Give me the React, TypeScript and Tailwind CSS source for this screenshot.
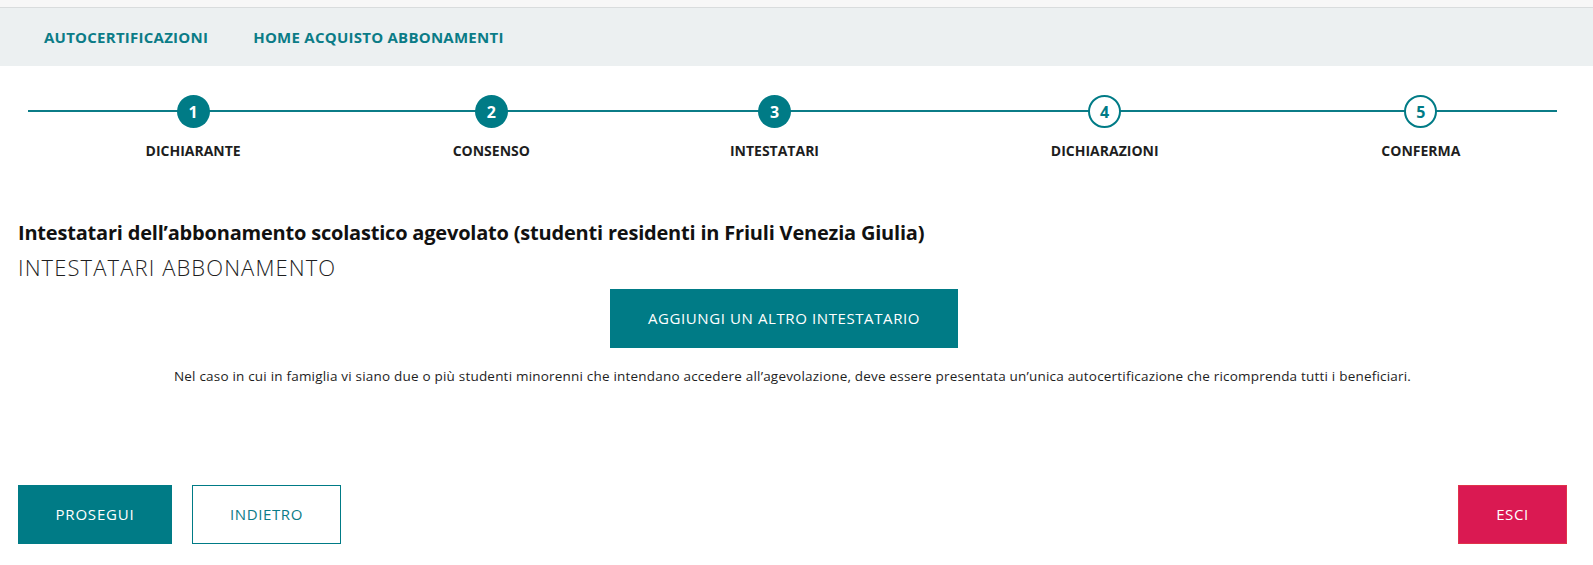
import React from "react";

const steps = [
  { n: 1, label: "DICHIARANTE", done: true },
  { n: 2, label: "CONSENSO", done: true },
  { n: 3, label: "INTESTATARI", done: true },
  { n: 4, label: "DICHIARAZIONI", done: false },
  { n: 5, label: "CONFERMA", done: false },
];

export default function App() {
  return (
    <div className="w-[1593px] h-[565px] bg-white overflow-hidden" style={{ fontFamily: "'Open Sans', 'Noto Sans', sans-serif" }}>
      <div className="h-[8px] bg-[#f7f7f7] border-b border-[#d9dcdd]" />
      <nav className="h-[58px] bg-[#ecf0f1] flex items-center pl-[44px] gap-[45px] text-[15px] font-bold text-[#0b7c87] tracking-[0.25px]">
        <span>AUTOCERTIFICAZIONI</span>
        <span>HOME ACQUISTO ABBONAMENTI</span>
      </nav>

      <div className="pl-[18px] pr-[26px]">
        <div className="mx-[10px] mt-[29px] relative">
          <div className="absolute left-0 right-0 top-[15px] h-[2px] bg-[#0b7c87]" />
          <div className="grid grid-cols-[330fr_266fr_300fr_360fr_272fr]">
            {steps.map((s) => (
              <div key={s.n} className="flex flex-col items-center">
                <div
                  className={
                    s.done
                      ? "relative z-10 w-[33px] h-[33px] rounded-full bg-[#007b86] text-white flex items-center justify-center text-[16px] font-bold"
                      : "relative z-10 w-[33px] h-[33px] rounded-full bg-white border-2 border-[#007b86] text-[#007b86] flex items-center justify-center text-[16px] font-bold"
                  }
                >
                  {s.n}
                </div>
                <div className="mt-[13px] h-[20px] leading-[20px] text-[14px] font-bold text-[#1e1e1e]">{s.label}</div>
              </div>
            ))}
          </div>
        </div>

        <h1 className="mt-[58px] text-[20px] leading-[28px] font-bold text-[#111] tracking-[-0.2px]">
          Intestatari dell’abbonamento scolastico agevolato (studenti residenti in Friuli Venezia Giulia)
        </h1>
        <h2 className="mt-[6px] text-[22px] leading-[28px] font-light text-[#1e1e1e] tracking-[1.1px]">INTESTATARI ABBONAMENTO</h2>

        <div className="mt-[8px] flex justify-center pr-[17px]">
          <button className="w-[348px] h-[59px] bg-[#007b86] text-white text-[15px] tracking-[0.6px]">
            AGGIUNGI UN ALTRO INTESTATARIO
          </button>
        </div>

        <p className="mt-[18px] h-[20px] leading-[20px] text-[13.5px] text-center text-[#1e1e1e] tracking-[0.2px]">
          Nel caso in cui in famiglia vi siano due o più studenti minorenni che intendano accedere all’agevolazione, deve essere presentata un’unica autocertificazione che ricomprenda tutti i beneficiari.
        </p>

        <div className="mt-[99px] flex items-start">
          <button className="w-[154px] h-[59px] bg-[#007b86] text-white text-[15px] tracking-[0.8px]">PROSEGUI</button>
          <button className="ml-[20px] w-[149px] h-[59px] bg-white border border-[#007b86] text-[#0b7c87] text-[15px] tracking-[0.6px]">
            INDIETRO
          </button>
          <button className="ml-auto w-[109px] h-[59px] bg-[#da1952] border border-[#e0334a] text-white text-[15px] tracking-[0.6px]">
            ESCI
          </button>
        </div>
      </div>
    </div>
  );
}
